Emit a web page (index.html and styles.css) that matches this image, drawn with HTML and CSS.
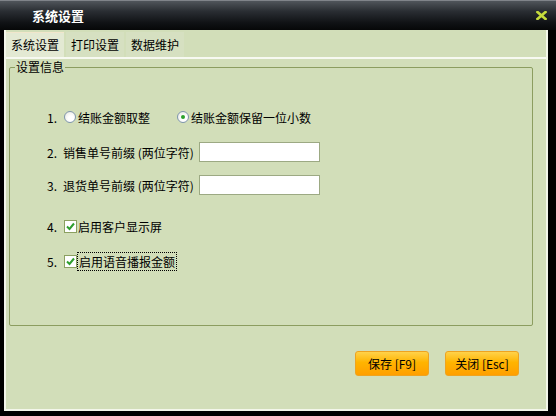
FILE: index.html
```html
<!DOCTYPE html>
<html lang="zh-CN">
<head>
    <meta charset="UTF-8">
    <title>系统设置</title>
    <link rel="stylesheet" href="styles.css">
</head>
<body>
    <div class="window">
        <div class="titlebar">
            <span class="title">系统设置</span>
            <svg class="close" width="11" height="9" viewBox="0 0 11 9">
                <path d="M1.5 1 L9.5 8 M9.5 1 L1.5 8" stroke="#c6dc3c" stroke-width="2.6" stroke-linecap="square"/>
            </svg>
        </div>
        <div class="frame">
            <div class="tabs">
                <div class="tab active">系统设置</div>
                <div class="tab">打印设置</div>
                <div class="tab">数据维护</div>
            </div>

            <fieldset class="group">
                <legend>设置信息</legend>
                <div class="group-body">
                    <div class="row">
                        <span class="num">1.</span>
                        <label class="opt">
                            <span class="radio"></span>结账金额取整
                        </label>
                        <label class="opt second">
                            <span class="radio checked"></span>结账金额保留一位小数
                        </label>
                    </div>
                    <div class="row">
                        <span class="num">2.</span>
                        <span class="field-label">销售单号前缀 (两位字符)</span>
                        <input type="text" class="field">
                    </div>
                    <div class="row tight">
                        <span class="num">3.</span>
                        <span class="field-label">退货单号前缀 (两位字符)</span>
                        <input type="text" class="field">
                    </div>
                    <div class="row sep">
                        <span class="num">4.</span>
                        <label class="opt">
                            <span class="check"><svg width="11" height="11" viewBox="0 0 11 11"><path d="M2 5.5 L4.5 8 L9 2.5" fill="none" stroke="#2e9e2e" stroke-width="2"/></svg></span>启用客户显示屏
                        </label>
                    </div>
                    <div class="row">
                        <span class="num">5.</span>
                        <label class="opt">
                            <span class="check"><svg width="11" height="11" viewBox="0 0 11 11"><path d="M2 5.5 L4.5 8 L9 2.5" fill="none" stroke="#2e9e2e" stroke-width="2"/></svg></span><span class="focused">启用语音播报金额</span>
                        </label>
                    </div>
                </div>
            </fieldset>

            <div class="actions">
                <button>保存 [F9]</button>
                <button>关闭 [Esc]</button>
            </div>
        </div>
    </div>
</body>
</html>
```

FILE: styles.css
```css
* {
    margin: 0;
    padding: 0;
    box-sizing: border-box;
}

body {
    font-family: "Noto Sans CJK SC", "Liberation Sans", sans-serif;
    font-size: 12px;
    color: #000;
    background: #000;
}

.window {
    width: 556px;
    height: 416px;
    display: flex;
    flex-direction: column;
    background: #000;
}

.titlebar {
    height: 30px;
    flex: none;
    display: flex;
    align-items: center;
    justify-content: space-between;
    padding: 0 9px 0 32px;
    background: linear-gradient(#50555b, #2a2e33 35%, #101215 75%, #060708);
    border-top: 1px solid #80848a;
}

.title {
    color: #fff;
    font-size: 13px;
    font-weight: bold;
}

.frame {
    flex: 1;
    margin: 0 8px 5px 4px;
    background: #d2deb9;
    border: 2px solid #f3f6ea;
    border-top: none;
}

.tabs {
    display: flex;
    gap: 2px;
    height: 29px;
    padding-top: 2px;
    border-bottom: 2px solid #f7f9f1;
}

.tab {
    height: 25px;
    line-height: 25px;
    padding: 0 5px;
    background: #d6e0c1;
}

.tab.active {
    background: #e3e9d3;
    border-top: 1px solid #f1e6cc;
    line-height: 23px;
}

.group {
    margin: 0 13px 0 3px;
    border: 1px solid #8c9d60;
    border-radius: 2px;
}

.group legend {
    margin-left: 5px;
    padding: 0 1px;
    line-height: 16px;
}

.group-body {
    padding: 32px 0 54px 37px;
}

.row {
    display: flex;
    align-items: center;
    height: 20px;
    margin-top: 15px;
}

.row:first-child {
    margin-top: 0;
}

.row.tight {
    margin-top: 13px;
}

.row.sep {
    margin-top: 21px;
}

.num {
    width: 16px;
}

.opt {
    display: flex;
    align-items: center;
    margin-left: 1px;
}

.opt.second {
    margin-left: 27px;
}

.radio {
    width: 12px;
    height: 12px;
    margin-right: 2px;
    border-radius: 50%;
    border: 1px solid #7f96ad;
    background: radial-gradient(circle at 60% 65%, #fff 30%, #e4e4dc 100%);
    display: flex;
    align-items: center;
    justify-content: center;
}

.radio.checked::after {
    content: "";
    width: 4px;
    height: 4px;
    border-radius: 50%;
    background: #2aa12a;
}

.check {
    width: 13px;
    height: 13px;
    margin-right: 1px;
    border: 1px solid #8ba060;
    background: #fff;
    display: flex;
    align-items: center;
    justify-content: center;
}

.focused {
    outline: 1px dotted #000;
    padding: 0 1px;
}

.field-label {
    width: 136px;
    white-space: nowrap;
}

.field {
    width: 121px;
    height: 20px;
    border: 1px solid #9ca983;
    background: #fff;
    outline: none;
}

.actions {
    display: flex;
    justify-content: flex-end;
    gap: 16px;
    margin: 25px 27px 0 0;
}

.actions button {
    width: 74px;
    height: 25px;
    font-family: "Noto Sans CJK SC", "Liberation Sans", sans-serif;
    font-size: 12px;
    color: #000;
    background: linear-gradient(#ffd24a, #ffb400 45%, #ff9f00);
    border: 1px solid #eea320;
    border-radius: 3px;
    cursor: pointer;
}
```
